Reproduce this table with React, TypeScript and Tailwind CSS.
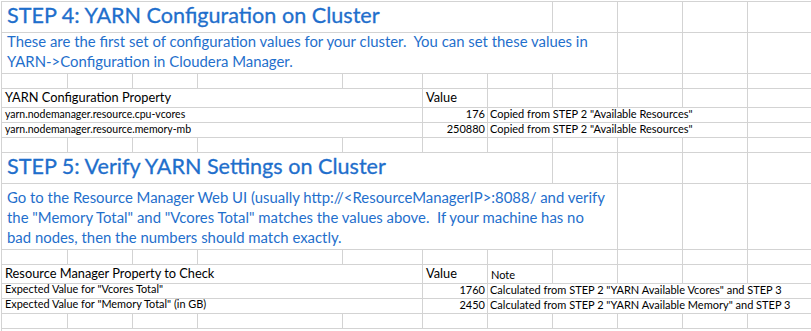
import React from "react";

// grid lines of the sheet
const line = "border-r border-b border-[#d3d3d3]";
const blue = "text-[#1f6fcc]";

function Blank({ n }: { n: number }) {
  return (
    <>
      {Array.from({ length: n }).map((_, i) => (
        <div key={i} className={line} />
      ))}
    </>
  );
}

function Title({ text }: { text: string }) {
  return (
    <>
      <div className={`${line} col-span-7 flex items-end pl-[5px] pb-[5px] ${blue} text-[21.6px] leading-none whitespace-nowrap [-webkit-text-stroke:0.3px_#1f6fcc]`}>
        {text}
      </div>
      <Blank n={4} />
    </>
  );
}

function Desc({ lines }: { lines: string[] }) {
  return (
    <>
      <div className={`${line} col-span-8 flex flex-col justify-end pl-[5px] pb-[2px] ${blue} text-[14.9px] leading-[20px] whitespace-pre`}>
        {lines.map((l) => (
          <div key={l}>{l}</div>
        ))}
      </div>
      <Blank n={3} />
    </>
  );
}

function Header({ label, note }: { label: string; note?: string }) {
  return (
    <>
      <div className={`${line} col-span-5 flex items-end pl-[3px] pb-[3px] text-[12.8px] leading-none whitespace-nowrap`}>
        {label}
      </div>
      <div className={`${line} flex items-end pl-[3px] pb-[3px] text-[12.8px] leading-none`}>
        Value
      </div>
      <div className={`${line} flex items-end pl-[3px] pb-[3px] text-[11px] leading-none`}>
        {note}
      </div>
      <Blank n={4} />
    </>
  );
}

function Row({ prop, value, note, wide }: { prop: string; value: string; note: string; wide?: boolean }) {
  return (
    <>
      <div className={`${line} col-span-5 flex items-end pl-[3px] pb-[3px] ${wide ? "text-[10.9px]" : "text-[10.5px]"} leading-none whitespace-nowrap`}>
        {prop}
      </div>
      <div className={`${line} flex items-end justify-end pr-[2px] pb-[3px] text-[11px] leading-none`}>
        {value}
      </div>
      <div className={`${line} ${wide ? "col-span-5" : "col-span-4"} flex items-end pl-[2px] pb-[3px] text-[11px] leading-none whitespace-nowrap`}>
        {note}
      </div>
      {!wide && <Blank n={1} />}
    </>
  );
}

export default function App() {
  return (
    <div className="w-[811px] h-[331px] overflow-hidden bg-white pt-[1px] pl-[1px] text-black" style={{ fontFamily: "Lato, 'Open Sans', sans-serif" }}>
      <div className="grid grid-cols-[66px_65px_65px_145px_80px_65px_65px_65px_65px_65px_65px] grid-rows-[31px_41px_15px_19px_15px_15px_15px_31px_66px_15px_19px_15px_15px_15px_15px] border-t border-l border-[#d3d3d3]">
        <Title text="STEP 4: YARN Configuration on Cluster" />
        <Desc
          lines={[
            "These are the first set of configuration values for your cluster.  You can set these values in",
            "YARN->Configuration in Cloudera Manager.",
          ]}
        />
        <Blank n={11} />
        <Header label="YARN Configuration Property" />
        <Row prop="yarn.nodemanager.resource.cpu-vcores" value="176" note={'Copied from STEP 2 "Available Resources"'} />
        <Row prop="yarn.nodemanager.resource.memory-mb" value="250880" note={'Copied from STEP 2 "Available Resources"'} />
        <Blank n={11} />

        <Title text="STEP 5: Verify YARN Settings on Cluster" />
        <Desc
          lines={[
            "Go to the Resource Manager Web UI (usually http://<ResourceManagerIP>:8088/ and verify",
            'the "Memory Total" and "Vcores Total" matches the values above.  If your machine has no',
            "bad nodes, then the numbers should match exactly.",
          ]}
        />
        <Blank n={11} />
        <Header label="Resource Manager Property to Check" note="Note" />
        <Row prop={'Expected Value for "Vcores Total"'} value="1760" note={'Calculated from STEP 2 "YARN Available Vcores" and STEP 3'} wide />
        <Row prop={'Expected Value for "Memory Total" (in GB)'} value="2450" note={'Calculated from STEP 2 "YARN Available Memory" and STEP 3'} wide />
        <Blank n={11} />
      </div>
    </div>
  );
}
